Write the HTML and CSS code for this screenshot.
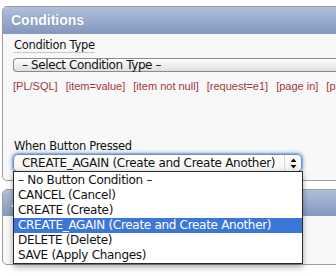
FILE: index.html
```html
<!DOCTYPE html>
<html>
<head>
<meta charset="utf-8">
<link rel="stylesheet" href="styles.css">
</head>
<body>
<div class="page">
  <section class="region">
    <div class="region-header">Conditions</div>
    <div class="region-body">
      <div class="field">
        <span class="label">Condition Type</span>
        <div class="select select-mini"><span class="select-text">&#8211; Select Condition Type &#8211;</span></div>
        <div class="shortcuts">
          <a>[PL/SQL]</a><a>[item=value]</a><a>[item not null]</a><a>[request=e1]</a><a>[page in]</a><a>[page not in]</a>
        </div>
      </div>
      <div class="field field-button">
        <span class="label label-plain">When Button Pressed</span>
        <div class="select select-popup">
          <span class="select-text">CREATE_AGAIN (Create and Create Another)</span>
          <span class="select-arrows">
            <svg width="7" height="11" viewBox="0 0 7 11"><path d="M3.5 0.5 L6.5 4 L0.5 4 Z M0.5 7 L6.5 7 L3.5 10.5 Z" fill="#111"/></svg>
          </span>
        </div>
      </div>
    </div>
  </section>
  <section class="region region-second">
    <div class="region-header">Authorization</div>
    <div class="region-body region-body-second"></div>
  </section>
  <ul class="menu">
    <li>&#8211; No Button Condition &#8211;</li>
    <li>CANCEL (Cancel)</li>
    <li>CREATE (Create)</li>
    <li class="selected">CREATE_AGAIN (Create and Create Another)</li>
    <li>DELETE (Delete)</li>
    <li>SAVE (Apply Changes)</li>
  </ul>
</div>
</body>
</html>
```
FILE: styles.css
```css
html, body {
  margin: 0;
  padding: 0;
  background: #ffffff;
}
body {
  width: 336px;
  height: 276px;
  overflow: hidden;
  font-family: "DejaVu Sans", sans-serif;
}
.page {
  position: relative;
  padding: 6px 0 0 2px;
}
.region {
  width: 400px;
  border: 1px solid #9c9c9c;
  border-radius: 5px 0 0 5px;
  background: #f8f8f8;
  overflow: hidden;
}
.region-header {
  height: 26px;
  line-height: 26px;
  padding-left: 8px;
  font-family: "Liberation Sans", Arial, sans-serif;
  font-weight: bold;
  font-size: 14px;
  color: #ffffff;
  text-shadow: 0 0 1px rgba(60, 80, 120, 0.5);
  background: linear-gradient(#b0bfdb, #8499bf);
  border-bottom: 1px solid #8a9cbc;
}
.region-body {
  height: 146px;
  padding: 3px 0 0 11px;
  box-sizing: border-box;
}
.field {
  display: flex;
  flex-direction: column;
  align-items: flex-start;
}
.label {
  font-size: 11.5px;
  letter-spacing: -0.3px;
  line-height: 14px;
  color: #111;
  border-bottom: 1px solid #c8c8c8;
  padding-top: 1px;
}
.label-plain {
  border-bottom: 0;
}
.select {
  display: flex;
  align-items: center;
  box-sizing: border-box;
}
.select-mini {
  margin: 5px 0 0 -1px;
  width: 340px;
  height: 14px;
  border: 1px solid #8c8c8c;
  border-right: 0;
  border-radius: 4px 0 0 4px;
  background: linear-gradient(#ffffff, #ececec 60%, #dedede);
  font-size: 12px;
  letter-spacing: -0.4px;
  padding-left: 8px;
  color: #111;
}
.select-mini .select-text {
  line-height: 12px;
}
.shortcuts {
  display: flex;
  gap: 8px;
  margin: 8px 0 0 -1px;
  font-family: "Liberation Sans", Arial, sans-serif;
  font-size: 11px;
  line-height: 13px;
  color: #9c3a3a;
  white-space: nowrap;
}
.field-button {
  margin-top: 46px;
}
.field-button .label {
  padding-top: 0;
}
.select-popup {
  margin: 1px 0 0 -1px;
  width: 289px;
  height: 18px;
  border: 1px solid #7f8fa6;
  border-radius: 5px;
  background: linear-gradient(#ffffff, #f2f2f2);
  box-shadow: 0 0 0 1px rgba(110, 160, 230, 0.6), 0 0 3px 2px rgba(90, 150, 230, 0.5);
  font-size: 12px;
  letter-spacing: -0.3px;
  padding-left: 8px;
  color: #111;
  justify-content: space-between;
}
.select-arrows {
  display: flex;
  align-items: center;
  justify-content: center;
  width: 16px;
  height: 16px;
  border-left: 1px solid #d6d6d6;
}
.select-arrows svg {
  display: block;
}
.region-second {
  margin-top: 8px;
  border-radius: 5px 0 0 5px;
}
.region-second .region-header {
  height: 25px;
  line-height: 25px;
}
.region-body-second {
  height: 48px;
}
.menu {
  position: absolute;
  left: 13px;
  top: 171px;
  width: 290px;
  margin: 0;
  padding: 1px 0 0 0;
  box-sizing: border-box;
  list-style: none;
  background: #ffffff;
  border: 1px solid #2a2a2a;
  box-shadow: 0 3px 6px rgba(0, 0, 0, 0.35);
  font-size: 12px;
  letter-spacing: -0.3px;
  color: #111;
}
.menu li {
  height: 15px;
  line-height: 15px;
  padding-left: 4px;
  white-space: nowrap;
}
.menu li.selected {
  background: #3b76d8;
  color: #ffffff;
}
```
